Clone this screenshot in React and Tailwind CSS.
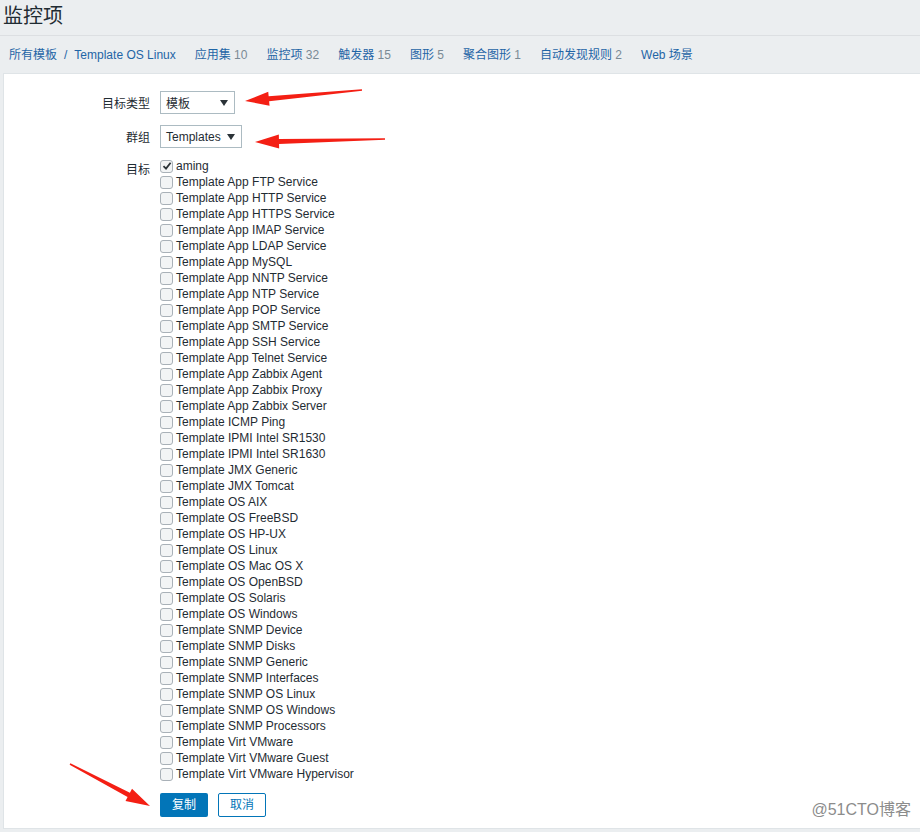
import React from "react";

const tabs = [
    { name: "应用集", count: "10" },
    { name: "监控项", count: "32" },
    { name: "触发器", count: "15" },
    { name: "图形", count: "5" },
    { name: "聚合图形", count: "1" },
    { name: "自动发现规则", count: "2" },
    { name: "Web 场景", count: "" },
];

const targets = [
    "Template App FTP Service",
    "Template App HTTP Service",
    "Template App HTTPS Service",
    "Template App IMAP Service",
    "Template App LDAP Service",
    "Template App MySQL",
    "Template App NNTP Service",
    "Template App NTP Service",
    "Template App POP Service",
    "Template App SMTP Service",
    "Template App SSH Service",
    "Template App Telnet Service",
    "Template App Zabbix Agent",
    "Template App Zabbix Proxy",
    "Template App Zabbix Server",
    "Template ICMP Ping",
    "Template IPMI Intel SR1530",
    "Template IPMI Intel SR1630",
    "Template JMX Generic",
    "Template JMX Tomcat",
    "Template OS AIX",
    "Template OS FreeBSD",
    "Template OS HP-UX",
    "Template OS Linux",
    "Template OS Mac OS X",
    "Template OS OpenBSD",
    "Template OS Solaris",
    "Template OS Windows",
    "Template SNMP Device",
    "Template SNMP Disks",
    "Template SNMP Generic",
    "Template SNMP Interfaces",
    "Template SNMP OS Linux",
    "Template SNMP OS Windows",
    "Template SNMP Processors",
    "Template Virt VMware",
    "Template Virt VMware Guest",
    "Template Virt VMware Hypervisor",
];

const font = "font-['Liberation_Sans','Noto_Sans_CJK_SC',sans-serif]";

function Box({ checked }) {
    return (
        <span className="w-[13px] h-[13px] rounded-[3px] border border-[#a9b1b8] bg-[#f2f4f5] flex items-center justify-center shrink-0">
            {checked && (
                <svg width="10" height="10" viewBox="0 0 10 10">
                    <path d="M1.5 5.2 L4 7.6 L8.6 1.8" stroke="#2b3338" strokeWidth="1.8" fill="none" />
                </svg>
            )}
        </span>
    );
}

function Caret() {
    return (
        <svg width="8" height="6" viewBox="0 0 8 6">
            <path d="M0 0 H8 L4 6 Z" fill="#2b3338" />
        </svg>
    );
}

function Arrow({ x1, y1, x2, y2 }) {
    const dx = x2 - x1;
    const dy = y2 - y1;
    const len = Math.sqrt(dx * dx + dy * dy);
    const ux = dx / len;
    const uy = dy / len;
    const px = -uy;
    const py = ux;
    const hl = 24;
    const hw = 7;
    const bx = x2 - ux * hl;
    const by = y2 - uy * hl;
    const pts = [
        `${x1 + px * 0.8},${y1 + py * 0.8}`,
        `${bx + px * 2.5},${by + py * 2.5}`,
        `${bx + px * hw},${by + py * hw}`,
        `${x2},${y2}`,
        `${bx - px * hw},${by - py * hw}`,
        `${bx - px * 2.5},${by - py * 2.5}`,
        `${x1 - px * 0.8},${y1 - py * 0.8}`,
    ].join(" ");
    return <polygon points={pts} fill="#f41f14" />;
}

export default function App() {
    return (
        <div className={`relative w-[920px] h-[832px] bg-[#ebeef0] overflow-hidden ${font}`}>
            <div className="h-[36px] border-b border-[#dcdfe2] pl-[3px] flex items-center">
                <h1 className="text-[20px] leading-none text-[#1f2c33] mt-[-4px]">监控项</h1>
            </div>

            <div className="h-[37px] flex items-center pl-[9px] text-[12px]">
                <a className="text-[#1f65a6]">所有模板</a>
                <span className="mx-[7px] text-[#1f65a6]">/</span>
                <a className="text-[#1f65a6]">Template OS Linux</a>
                <div className="flex gap-[19px] ml-[19px]">
                    {tabs.map((t) => (
                        <span key={t.name}>
                            <a className="text-[#1f65a6]">{t.name}</a>
                            {t.count && <span className="text-[#7a8a95]"> {t.count}</span>}
                        </span>
                    ))}
                </div>
            </div>

            <div className="ml-[3px] h-[756px] bg-white border-l border-t border-b border-[#dfe4e7] pt-[17px]">
                <div className="grid grid-cols-[146px_1fr] gap-x-[10px] gap-y-[11px] text-[12px] text-[#1f2c33]">
                    <label className="text-right pt-[4px]">目标类型</label>
                    <div>
                        <div className="w-[75px] h-[23px] border border-[#acbbc2] flex items-center justify-between pl-[5px] pr-[6px]">
                            <span className="mt-[2px]">模板</span>
                            <Caret />
                        </div>
                    </div>

                    <label className="text-right pt-[4px]">群组</label>
                    <div>
                        <div className="w-[82px] h-[23px] border border-[#acbbc2] flex items-center justify-between pl-[5px] pr-[6px]">
                            <span>Templates</span>
                            <Caret />
                        </div>
                    </div>

                    <label className="text-right pt-[3px] mt-[-1px]">目标</label>
                    <div className="mt-[-1px] flex flex-col">
                        <div className="h-[16px] flex items-center gap-[3px]">
                            <Box checked />
                            <span>aming</span>
                        </div>
                        {targets.map((t) => (
                            <div key={t} className="h-[16px] flex items-center gap-[3px]">
                                <Box />
                                <span>{t}</span>
                            </div>
                        ))}
                        <div className="flex gap-[10px] mt-[11px]">
                            <button className="w-[48px] h-[24px] rounded-[2px] bg-[#0275b8] text-white text-[12px]">复制</button>
                            <button className="w-[48px] h-[24px] rounded-[2px] border border-[#0275b8] bg-white text-[#0275b8] text-[12px]">取消</button>
                        </div>
                    </div>
                </div>
            </div>

            <span className="absolute right-[9px] bottom-[10px] text-[16px] text-[#8c8c8c]">@51CTO博客</span>

            <svg className="absolute inset-0 pointer-events-none" width="920" height="832">
                <Arrow x1={362} y1={90} x2={245} y2={101} />
                <Arrow x1={385} y1={139} x2={255} y2={142} />
                <Arrow x1={70} y1={764} x2={150} y2={806} />
            </svg>
        </div>
    );
}
